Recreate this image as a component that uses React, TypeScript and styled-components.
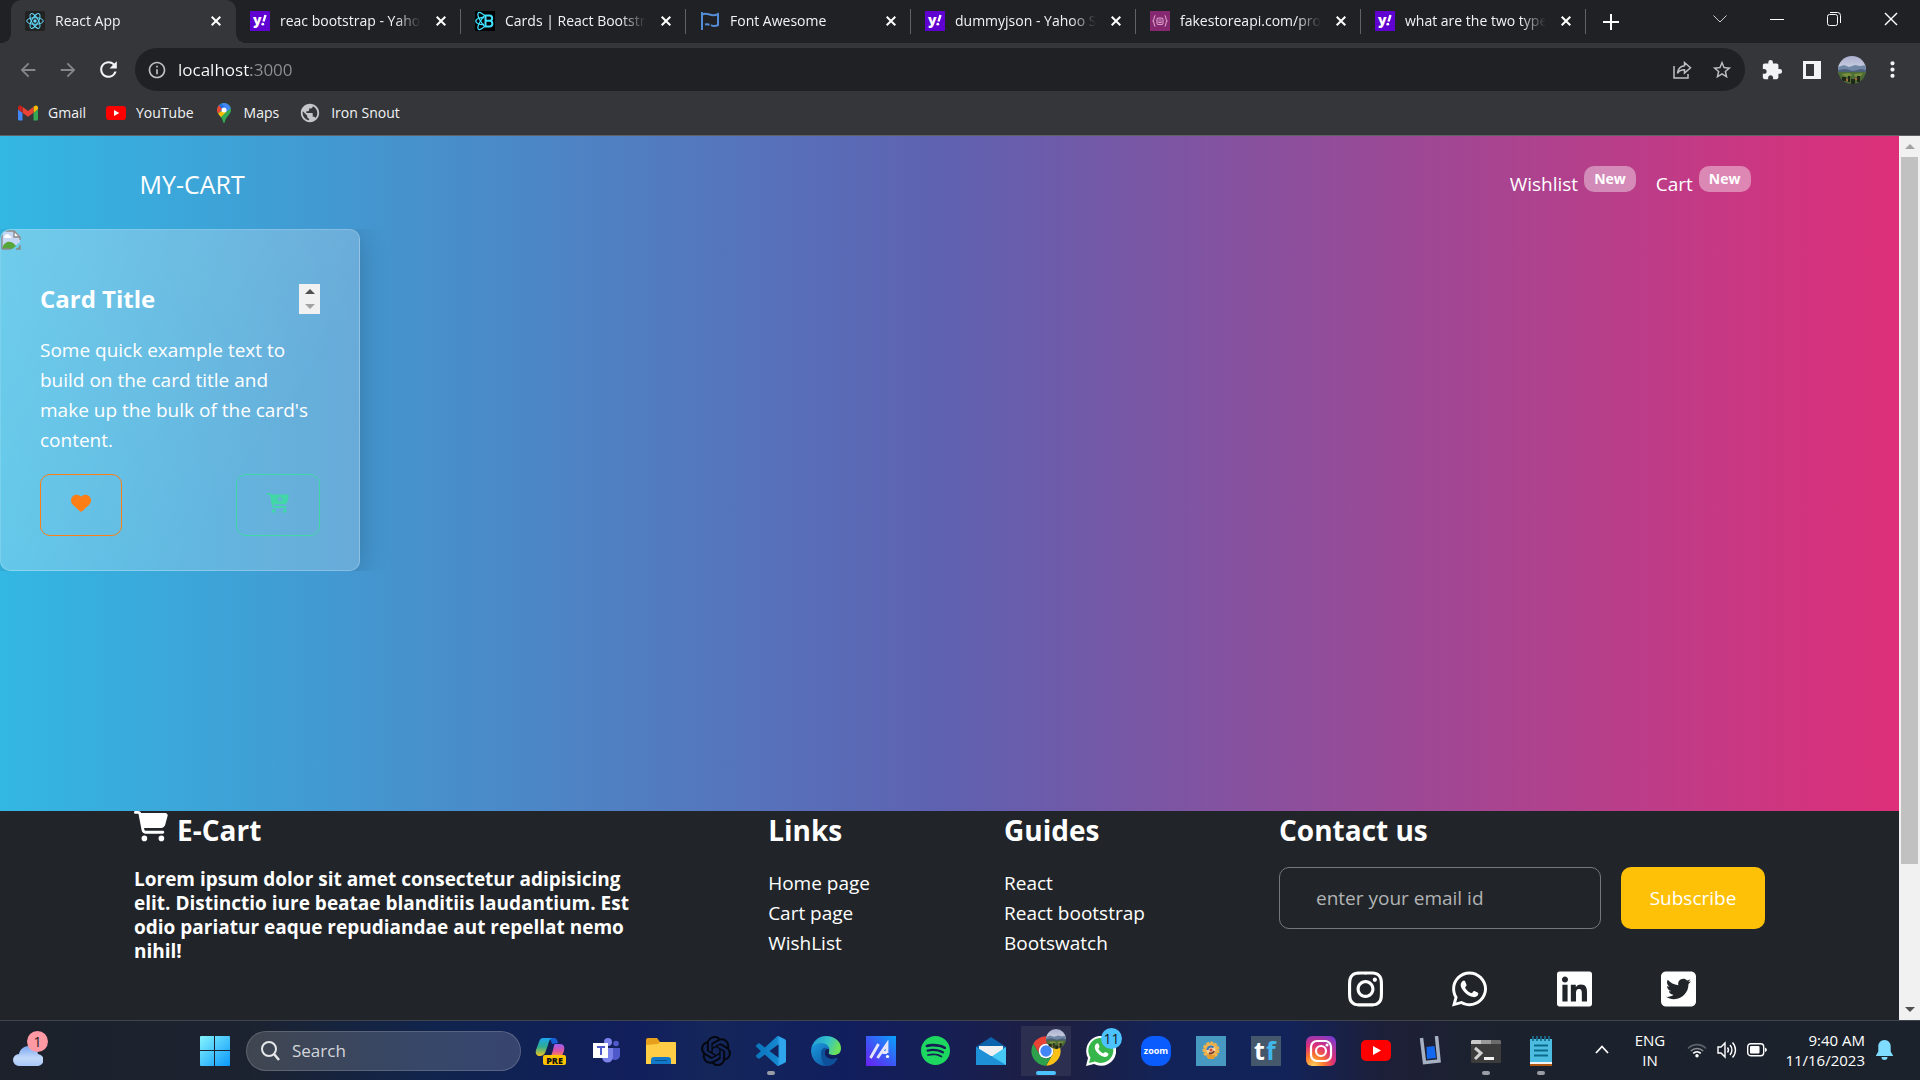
import React from "react";
import styled, { createGlobalStyle, css } from "styled-components";
import {
  FaHeart,
  FaCartPlus,
  FaCartShopping,
  FaInstagram,
  FaWhatsapp,
  FaLinkedin,
  FaSquareTwitter,
} from "react-icons/fa6";
import { SiOpenai, SiSpotify } from "react-icons/si";
import {
  MdArrowBack,
  MdArrowForward,
  MdRefresh,
  MdInfoOutline,
  MdStarBorder,
  MdExtension,
  MdMoreVert,
  MdPublic,
} from "react-icons/md";

const Global = createGlobalStyle`
  *, *::before, *::after { box-sizing: border-box; }
  body {
    margin: 0;
    font-family: "Open Sans", "Noto Sans", sans-serif;
    font-size: 19px;
    line-height: 30px;
    color: #fff;
    background: #212529;
  }
  button, input { font: inherit; color: inherit; }
  button { padding: 0; border: 0; background: none; cursor: pointer; }
  a { color: inherit; text-decoration: none; }
  h1, h2, h3, p, ul { margin: 0; padding: 0; }
  svg { display: block; flex: none; }
`;

const Screen = styled.div`
  display: flex;
  flex-direction: column;
  height: 100vh;
  overflow: hidden;
`;

/* ---------- Browser frame ---------- */

const TabStrip = styled.div`
  display: flex;
  align-items: stretch;
  height: 43px;
  padding-left: 11px;
  background: #202124;
`;

const TabList = styled.div`
  display: flex;
`;

const Tab = styled.div<{ $active?: boolean; $divided?: boolean }>`
  position: relative;
  display: flex;
  align-items: center;
  gap: 10px;
  width: 225px;
  padding: 0 10px 1px 14px;
  ${(p) =>
    p.$active &&
    css`
      background: #35363a;
      border-radius: 10px 10px 0 0;
      &::before,
      &::after {
        content: "";
        position: absolute;
        bottom: 0;
        width: 10px;
        height: 10px;
      }
      &::before {
        right: 100%;
        background: radial-gradient(circle at 0 0, transparent 10px, #35363a 10px);
      }
      &::after {
        left: 100%;
        background: radial-gradient(circle at 100% 0, transparent 10px, #35363a 10px);
      }
    `}
  ${(p) =>
    p.$divided &&
    css`
      background: linear-gradient(#5f6368, #5f6368) right center / 1px 25px no-repeat;
    `}
`;

const TabTitle = styled.button`
  flex: 1;
  min-width: 0;
  overflow: hidden;
  white-space: nowrap;
  text-align: left;
  font-size: 14px;
  line-height: 20px;
  color: #f1f3f4;
  mask-image: linear-gradient(to right, #000 82%, transparent);
`;

const SmallButton = styled.button`
  display: grid;
  place-items: center;
  width: 20px;
  height: 20px;
`;

const NewTab = styled.button`
  display: grid;
  place-items: center;
  width: 50px;
`;

const WindowControls = styled.div`
  display: flex;
  margin-left: auto;
  padding-right: 1px;
  height: 38px;
`;

const WindowButton = styled.button`
  display: grid;
  place-items: center;
  width: 57px;
`;

const Toolbar = styled.div`
  display: flex;
  align-items: center;
  height: 53px;
  padding: 0 8px;
  background: #35363a;
`;

const NavButton = styled.button<{ $dim?: boolean }>`
  display: grid;
  place-items: center;
  width: 40px;
  height: 40px;
  color: ${(p) => (p.$dim ? "#85878a" : "#f1f3f4")};
`;

const Omnibox = styled.div`
  display: flex;
  flex: 1;
  align-items: center;
  height: 43px;
  margin: 0 7px;
  padding: 0 3px 0 12px;
  border-radius: 22px;
  background: #202124;
  color: #bdc1c6;
`;

const Address = styled.input`
  flex: 1;
  min-width: 0;
  margin-left: 11px;
  padding: 0;
  border: 0;
  outline: 0;
  font-size: 17px;
  line-height: 24px;
  color: #fff;
  background: linear-gradient(to right, #fff 73px, #8d9094 73px);
  background-clip: text;
  -webkit-text-fill-color: transparent;
`;

const Bookmarks = styled.nav`
  display: flex;
  align-items: center;
  gap: 20px;
  height: 40px;
  padding: 0 18px 6px;
  background: #35363a;
  border-bottom: 1px solid #5f6063;
  font-size: 14px;
  line-height: 20px;
  color: #f1f3f4;
`;

const Bookmark = styled.a`
  display: flex;
  align-items: center;
  gap: 10px;
`;

/* ---------- Page ---------- */

const Viewport = styled.div`
  display: flex;
  flex: 1;
  min-height: 0;
`;

const Page = styled.div`
  display: flex;
  flex: 1;
  flex-direction: column;
  min-width: 0;
  overflow: hidden;
  background: linear-gradient(90deg, #33b7e3, #5f61b0 50%, #de2f79);
`;

const Scrollbar = styled.div`
  display: flex;
  flex-direction: column;
  width: 21px;
  padding: 0 2px;
  background: #f1f1f1;
`;

const ScrollTrack = styled.div`
  flex: 1;
`;

const ScrollThumb = styled.div`
  height: 84%;
  background: #c1c1c1;
`;

const ScrollArrow = styled.button`
  display: grid;
  place-items: center;
  height: 21px;
`;

const SiteNav = styled.nav`
  display: flex;
  align-items: flex-start;
  justify-content: space-between;
  width: 100%;
  max-width: 1650px;
  margin: 0 auto;
  padding: 30px 24px 27px 15px;
`;

const Brand = styled.a`
  font-size: 25px;
  line-height: 36px;
`;

const NavLinks = styled.div`
  display: flex;
  gap: 20px;
  height: 33px;
`;

const NavLink = styled.a`
  display: flex;
  align-items: flex-end;
  gap: 6px;
`;

const Badge = styled.span`
  align-self: flex-start;
  padding: 0 10px;
  border-radius: 10px;
  background: rgba(255, 255, 255, 0.4);
  font-size: 14px;
  font-weight: 700;
  line-height: 26px;
`;

const Products = styled.main`
  flex: 1;
  overflow: hidden;
`;

const CardRow = styled.div`
  display: flex;
  overflow: hidden;
`;

const Card = styled.article`
  width: 360px;
  border: 1px solid rgba(255, 255, 255, 0.2);
  border-radius: 10px;
  background: linear-gradient(125deg, rgba(255, 255, 255, 0.3), rgba(255, 255, 255, 0.2) 70%);
  box-shadow: 1px 3px 28px rgba(0, 0, 0, 0.2);
  overflow: hidden;
`;

const CardBody = styled.div`
  padding: 34px 39px;
`;

const CardHead = styled.div`
  display: flex;
  justify-content: space-between;
  height: 30px;
  margin-bottom: 21px;
`;

const CardTitle = styled.h2`
  font-size: 24px;
  line-height: 30px;
`;

const CardText = styled.p`
  margin-bottom: 19px;
`;

const Stepper = styled.div`
  display: flex;
  flex-direction: column;
  width: 21px;
  background: #f1f1f1;
`;

const StepButton = styled.button`
  display: grid;
  flex: 1;
  place-items: center;
`;

const CardActions = styled.div`
  display: flex;
  justify-content: space-between;
`;

const OutlineButton = styled.button<{ $color: string }>`
  height: 62px;
  padding: 0 30px 4px;
  border: 1px solid ${(p) => p.$color};
  border-radius: 10px;
  color: ${(p) => p.$color};
`;

const Footer = styled.footer`
  background: #212529;
`;

const FooterInner = styled.div`
  display: flex;
  justify-content: space-between;
  width: 100%;
  max-width: 1631px;
  margin: 0 auto;
  padding-bottom: 11px;
`;

const About = styled.section`
  width: 500px;
`;

const FooterTitle = styled.h2`
  display: flex;
  gap: 9px;
  margin-bottom: 20px;
  font-size: 28px;
  line-height: 38px;
  height: 36px;
`;

const AboutText = styled.p`
  font-weight: 700;
  line-height: 24px;
`;

const LinkList = styled.ul`
  padding-top: 1px;
  list-style: none;
`;

const Contact = styled.section`
  width: 486px;
`;

const Subscribe = styled.form`
  display: flex;
  gap: 20px;
  margin-bottom: 40px;
`;

const EmailInput = styled.input`
  flex: 1;
  min-width: 0;
  height: 62px;
  padding: 0 36px;
  border: 1px solid #75787b;
  border-radius: 10px;
  outline: 0;
  background: transparent;
  &::placeholder {
    color: #b1b3b5;
    opacity: 1;
  }
`;

const SubscribeButton = styled.button`
  width: 144px;
  height: 62px;
  border-radius: 10px;
  background: #ffc107;
`;

const Socials = styled.div`
  display: flex;
  justify-content: space-evenly;
  svg {
    width: 35px;
    height: 40px;
  }
`;

/* ---------- Taskbar ---------- */

const Taskbar = styled.div`
  display: flex;
  align-items: center;
  height: 60px;
  border-top: 1px solid #3f444d;
  background: linear-gradient(
    90deg,
    #1c212b 0,
    #1c2330 13%,
    #10244e 23%,
    #111e5c 33%,
    #14265a 37%,
    #111e5e 44%,
    #171f52 50%,
    #1e1f40 55%,
    #122359 61%,
    #12235a 67%,
    #1d1f38 72%,
    #1c222d 78%,
    #1c222c 100%
  );
`;

const Widgets = styled.div`
  width: 187px;
  padding-left: 13px;
`;

const AppButton = styled.button<{ $open?: boolean }>`
  position: relative;
  display: grid;
  place-items: center;
  width: 55px;
  height: 50px;
  ${(p) =>
    p.$open &&
    css`
      background: linear-gradient(#2c2f50, #2c2f50) center / 50px 50px no-repeat;
    `}
`;

const Running = styled.span<{ $active?: boolean }>`
  position: absolute;
  bottom: 1px;
  width: ${(p) => (p.$active ? 20 : 8)}px;
  height: 4px;
  border-radius: 2px;
  background: ${(p) => (p.$active ? "#4cc2ff" : "#9a9ca6")};
`;

const Count = styled.span<{ $pink?: boolean }>`
  position: absolute;
  top: ${(p) => (p.$pink ? -4 : 2)}px;
  right: ${(p) => (p.$pink ? -5 : 6)}px;
  width: 21px;
  height: 21px;
  border-radius: 50%;
  background: ${(p) => (p.$pink ? "#ff99a4" : "#4cc2ff")};
  color: #1b1b1b;
  font-size: 14px;
  line-height: 21px;
  text-align: center;
`;

const WeatherButton = styled.button`
  position: relative;
  display: block;
  width: 30px;
  height: 32px;
  padding-top: 10px;
`;

const AvatarBadge = styled.span`
  position: absolute;
  top: 3px;
  right: 7px;
`;

const SearchBox = styled.label`
  display: flex;
  align-items: center;
  gap: 12px;
  width: 275px;
  height: 40px;
  margin: 0 2px 0 4px;
  padding: 0 13px;
  border: 1px solid rgba(255, 255, 255, 0.16);
  border-radius: 20px;
  background: rgba(255, 255, 255, 0.16);
`;

const SearchInput = styled.input`
  flex: 1;
  min-width: 0;
  padding: 0;
  border: 0;
  outline: 0;
  background: transparent;
  font-size: 17px;
  line-height: 24px;
  &::placeholder {
    color: #d4d6db;
    opacity: 1;
  }
`;

const Tray = styled.div`
  display: flex;
  align-items: center;
  margin-left: auto;
  padding: 0 26px 2px 0;
  font-size: 15px;
  line-height: 20px;
`;

const TrayButton = styled.button<{ $width: number }>`
  display: grid;
  place-items: center;
  width: ${(p) => p.$width}px;
`;

const Clock = styled.div`
  width: 90px;
  margin-right: 9px;
  text-align: right;
  white-space: nowrap;
`;

/* ---------- Drawings ---------- */

const Yahoo = () => (
  <svg width="20" height="20" viewBox="0 0 20 20">
    <path fill="#5f01d1" d="M0 0h20v20H0z" />
    <text x="3" y="14" fontSize="14" fontWeight="800" fill="#fff">
      y
    </text>
    <path d="M15.500 4l-2 6.500" stroke="#fff" strokeWidth="2.400" />
    <circle cx="12.800" cy="13.200" r="1.400" fill="#fff" />
  </svg>
);

const ReactTab = () => (
  <svg width="20" height="20" viewBox="0 0 20 20">
    <rect width="20" height="20" rx="2" fill="#222" />
    <g fill="none" stroke="#61dafb" strokeWidth="1">
      <ellipse cx="10" cy="10" rx="8.300" ry="3.300" />
      <ellipse cx="10" cy="10" rx="8.300" ry="3.300" transform="rotate(60 10 10)" />
      <ellipse cx="10" cy="10" rx="8.300" ry="3.300" transform="rotate(120 10 10)" />
    </g>
    <circle cx="10" cy="10" r="1.700" fill="#61dafb" />
  </svg>
);

const ReactBootstrap = () => (
  <svg width="20" height="20" viewBox="0 0 20 20">
    <path fill="#000" d="M0 0h20v20H0z" />
    <g fill="none" stroke="#41e0fd" strokeWidth="1.300">
      <path d="M9 6.500C4 6.500 .8 8 .8 10s3.200 3.500 8.200 3.500" />
      <path d="M9 4C6 1.500 4 .8 3.200 2c-1 1.600.6 5.500 3.300 9.500 1.500 2.300 2.500 3.500 3.500 4.500" />
      <path d="M9 16c-3 2.500-5 3.200-5.800 2-1-1.600.6-5.500 3.300-9.500C8 6.200 9 5 10 4" />
    </g>
    <path
      d="M10.500 4.500h4a2.600 2.600 0 0 1 0 5.300h-4zm0 5.300h4.500a2.900 2.900 0 0 1 0 5.700h-4.500z"
      fill="none"
      stroke="#41e0fd"
      strokeWidth="2"
    />
  </svg>
);

const Flag = () => (
  <svg width="20" height="20" viewBox="0 0 20 20" fill="none" stroke="#538dd7" strokeWidth="2">
    <path d="M2 1v18" />
    <path d="M2 3.500c3-1.200 5-.9 7.500 0 3 1.100 5.500 1 8.500-.4v11c-3 1.400-5 1.200-7-.1M5 13.500c1.500-.3 3-.3 4.500.3" />
  </svg>
);

const FakeStore = () => (
  <svg width="20" height="20" viewBox="0 0 20 20">
    <path fill="#86286f" d="M0 0h20v20H0z" />
    <g fill="none" stroke="#d9a3cd" strokeWidth="1.100">
      <path d="M5.500 4.500C3.500 4.500 4.800 9 3 10c1.800 1 .5 5.500 2.500 5.500M14.500 4.500c2 0 .7 4.500 2.500 5.500-1.800 1-.5 5.500-2.500 5.500" />
      <rect x="7" y="7" width="6" height="6.500" rx="1.500" />
      <path d="M8.500 9h3M8.500 10.500c.5 1.500 2.500 1.500 3 0" />
    </g>
  </svg>
);

const Cross = ({ size = 10, width = 2 }: { size?: number; width?: number }) => (
  <svg width={size} height={size} viewBox="0 0 10 10" stroke="#fff" strokeWidth={width}>
    <path d="M.7.7l8.600 8.600M9.300.7L.7 9.300" />
  </svg>
);

const Share = () => (
  <svg width="20" height="20" viewBox="0 0 20 20" fill="none" stroke="#bdc1c6" strokeWidth="1.500">
    <path d="M2 6v12h14v-4" />
    <path d="M12.500 2.500l6 5.300-6 5.200v-3.200c-3.500 0-5.500 1-7 3.600.4-4.300 2.700-7.200 7-7.700z" />
  </svg>
);

const Avatar = ({ size }: { size: number }) => (
  <svg width={size} height={size} viewBox="0 0 28 28">
    <defs>
      <clipPath id="avatarClip">
        <circle cx="14" cy="14" r="14" />
      </clipPath>
      <linearGradient id="avatarSky" x2="0" y2="1">
        <stop offset="0" stopColor="#aab0cf" />
        <stop offset="1" stopColor="#d0d4e4" />
      </linearGradient>
    </defs>
    <g clipPath="url(#avatarClip)">
      <path fill="url(#avatarSky)" d="M0 0h28v14H0z" />
      <path fill="#7187a6" d="M0 11l6-2 5 2 6-2 5 1 6-1v8H0z" />
      <path fill="#4c6079" d="M0 14l8-1 7 2 8-2 5 1v4H0z" />
      <path fill="#4f6b35" d="M0 16h28v12H0z" />
      <path fill="#76903f" d="M3 18l8-1 4 2-7 2zM16 18l9-1-2 3-6 1z" />
      <path fill="#1f2818" d="M4 21h4v4H4zM10 20h2v6h-2zM13 23h4v5h-4zM19 20h3v6h-3z" />
      <path fill="#a9683f" d="M8 23h2v2H8zM17 22h2v2h-2z" />
    </g>
  </svg>
);

const Gmail = () => (
  <svg width="20" height="20" viewBox="0 0 24 24">
    <path fill="#4285f4" d="M1.600 21h3.800v-9.300L0 7.600v11.800C0 20.300.7 21 1.600 21z" />
    <path fill="#34a853" d="M18.600 21h3.800c.9 0 1.600-.7 1.600-1.600V7.600l-5.400 4.100z" />
    <path fill="#fbbc04" d="M18.600 4.600v7.100L24 7.600V5.500c0-2-2.300-3.200-3.900-2z" />
    <path fill="#ea4335" d="M5.400 11.700V4.600l6.600 5 6.600-5v7.100l-6.600 4.900z" />
    <path fill="#c5221f" d="M0 5.500v2.100l5.400 4.100V4.600L3.900 3.500C2.300 2.300 0 3.500 0 5.500z" />
  </svg>
);

const YouTube = ({ width = 20 }: { width?: number }) => (
  <svg width={width} height={(width * 7) / 10} viewBox="0 0 30 21">
    <rect width="30" height="21" rx="5" fill="#f00" />
    <path fill="#fff" d="M12 6l8 4.500-8 4.500z" />
  </svg>
);

const Maps = () => (
  <svg width="20" height="20" viewBox="0 0 20 20">
    <defs>
      <clipPath id="pinClip">
        <path d="M10 0a7 7 0 0 0-7 7c0 4.500 5 6 6.200 12.200.2 1 1.400 1 1.600 0C12 13 17 11.500 17 7a7 7 0 0 0-7-7z" />
      </clipPath>
    </defs>
    <g clipPath="url(#pinClip)">
      <path fill="#34a853" d="M0 0h20v20H0z" />
      <path fill="#fbbc04" d="M3 12L14 1v6l-8 8z" />
      <path fill="#4285f4" d="M8 0h12v3l-8 6-4-3z" />
      <path fill="#1a73e8" d="M3 2l3-2 5 4-4 5z" />
      <path fill="#ea4335" d="M0 4l5-2 3 4-5 6z" />
    </g>
    <circle cx="10" cy="7" r="2.500" fill="#fff" />
  </svg>
);

const BrokenImage = () => (
  <svg width="20" height="20" viewBox="0 0 20 20" role="img" aria-label="Product">
    <path fill="#c6d6f5" d="M1 1h12l6 5v6l-9 7H1z" />
    <path fill="#fff" d="M13 1v5h6zM3 7c0-3 5-4 6-1 2 0 2 2 1 2H4c-1 0-1-1-1-1z" />
    <path fill="#57a63a" d="M1 19c2-9 10-9 14-3l-4 3zM16 19l3-3v3z" />
    <path d="M1 19V1h12l6 6v3M1 19h9M15 19h4v-4M13 1v6h6" fill="none" stroke="#8b8b8b" strokeWidth="1.400" />
  </svg>
);

const Triangle = ({ down, color }: { down?: boolean; color: string }) => (
  <svg width="10" height="5" viewBox="0 0 10 5">
    <path fill={color} d={down ? "M0 0h10L5 5z" : "M0 5h10L5 0z"} />
  </svg>
);

const Cloud = () => (
  <svg width="30" height="20" viewBox="0 0 30 20">
    <defs>
      <linearGradient id="cloud" x2="0" y2="1">
        <stop offset="0" stopColor="#7ba6ee" />
        <stop offset=".6" stopColor="#c3d9fb" />
        <stop offset="1" stopColor="#a7c7f7" />
      </linearGradient>
    </defs>
    <path fill="url(#cloud)" d="M6 20a6 6 0 0 1 0-12C7 3 11 0 16 0c5 0 8 3 9 8a6 6 0 0 1-1 12z" />
  </svg>
);

const WindowsLogo = () => (
  <svg width="30" height="30" viewBox="0 0 30 30">
    <defs>
      <linearGradient id="win" x2="1" y2="1">
        <stop offset="0" stopColor="#85f4fd" />
        <stop offset="1" stopColor="#0a98fb" />
      </linearGradient>
    </defs>
    <path fill="url(#win)" d="M0 1a1 1 0 0 1 1-1h13v14H0zM15 0h14a1 1 0 0 1 1 1v13H15zM0 15h14v15H1a1 1 0 0 1-1-1zM15 15h15v14a1 1 0 0 1-1 1H15z" />
  </svg>
);

const Copilot = () => (
  <svg width="32" height="30" viewBox="0 0 32 30">
    <defs>
      <linearGradient id="copA" x2="0" y2="1">
        <stop offset="0" stopColor="#1ba5f0" />
        <stop offset=".5" stopColor="#2fae8f" />
        <stop offset="1" stopColor="#f2c51d" />
      </linearGradient>
      <linearGradient id="copB" x2="0" y2="1">
        <stop offset="0" stopColor="#9a5cf0" />
        <stop offset=".6" stopColor="#e0549e" />
        <stop offset="1" stopColor="#fb8a4c" />
      </linearGradient>
    </defs>
    <path fill="#1560d8" d="M15 2h4c2 0 3 1 4 5l-6 1z" />
    <path fill="url(#copA)" d="M8 2h10c-3 0-4 3-5 7l-3 8c-1 2-3 3-5 3-3 0-5-2-4-6l3-8c1-3 2-4 4-4z" />
    <path fill="url(#copB)" d="M20 8h5c4 0 5 3 4 7l-2 5H14c3 0 3-3 4-6 1-4 1-6 2-6z" />
    <rect x="8" y="19" width="23" height="10" rx="2" fill="#ffc400" />
    <text x="19.500" y="27.500" fontSize="9" fontWeight="800" textAnchor="middle" fill="#111">
      PRE
    </text>
  </svg>
);

const Teams = () => (
  <svg width="30" height="30" viewBox="0 0 30 30">
    <circle cx="17" cy="6" r="4" fill="#7b83eb" />
    <circle cx="25" cy="7.500" r="2.800" fill="#5059c9" />
    <path fill="#5059c9" d="M19 12h10v7a5 5 0 0 1-9 3z" />
    <path fill="#7b83eb" d="M11 12h11v9a5.500 5.500 0 0 1-11 0z" />
    <path fill="#fff" d="M2 7h15v15H2z" />
    <path fill="#5059c9" d="M6 10h8v2h-3v7H9v-7H6z" />
  </svg>
);

const Folder = () => (
  <svg width="30" height="30" viewBox="0 0 30 30">
    <path fill="#e8a01c" d="M0 4a2 2 0 0 1 2-2h9l3 4h14a2 2 0 0 1 2 2v6H0z" />
    <path fill="#ffcd46" d="M0 9l12-1 2-2h15a1 1 0 0 1 1 1v21H0z" />
    <path fill="#1278c8" d="M5 28v-4a3 3 0 0 1 3-3h14a3 3 0 0 1 3 3v4z" />
    <path fill="#0a4f8f" d="M9 24h12v1H9z" />
  </svg>
);

const VsCode = () => (
  <svg width="30" height="30" viewBox="0 0 24 24">
    <defs>
      <linearGradient id="vsc">
        <stop offset="0" stopColor="#0a74ba" />
        <stop offset=".7" stopColor="#1487d0" />
        <stop offset=".8" stopColor="#2fa5ee" />
      </linearGradient>
    </defs>
    <path
      fill="url(#vsc)"
      d="M23.150 2.587L18.210.21a1.494 1.494 0 0 0-1.705.29l-9.460 8.630-4.120-3.128a.999.999 0 0 0-1.276.057L.327 7.261A1 1 0 0 0 .326 8.740L3.899 12 .326 15.260a1 1 0 0 0 .001 1.479L1.650 17.940a.999.999 0 0 0 1.276.057l4.120-3.128 9.460 8.630a1.492 1.492 0 0 0 1.704.29l4.942-2.377A1.500 1.500 0 0 0 24 20.060V3.939a1.500 1.500 0 0 0-.850-1.352zm-5.146 14.861L10.826 12l7.178-5.448v10.896z"
    />
  </svg>
);

const Edge = () => (
  <svg width="30" height="30" viewBox="0 0 30 30">
    <defs>
      <linearGradient id="edgeA" x2="1" y2=".3">
        <stop offset="0" stopColor="#1d93d8" />
        <stop offset=".6" stopColor="#35c3c9" />
        <stop offset="1" stopColor="#6be05a" />
      </linearGradient>
      <linearGradient id="edgeB" x2="1" y2="1">
        <stop offset="0" stopColor="#1c9be0" />
        <stop offset="1" stopColor="#0c4a96" />
      </linearGradient>
    </defs>
    <path fill="url(#edgeA)" d="M0 14C1 6 7 0 15 0c9 0 15 6 15 12 0 5-3 7-7 7-4 0-6-1-5-3 1-3-1-8-8-8-5 0-9 3-10 6z" />
    <path fill="url(#edgeB)" d="M0 14C2 9 6 7 10 7c5 0 8 3 8.500 6-3-1-5 1-5 4 0 4 5 8 13 5-2 5-6 8-11.500 8C6 30 0 23 0 14z" />
    <path fill="#0e4f9a" d="M10 17c0-4 3-6 6-5-2 1-2.500 3-2.500 5 0 4 5 8 13 5-2 5-6 8-11.500 8-3-2-5-7-5-13z" />
  </svg>
);

const MyAsus = () => (
  <svg width="30" height="30" viewBox="0 0 30 30">
    <defs>
      <linearGradient id="asus" x1="0" y1="1" x2="1" y2="0">
        <stop offset="0" stopColor="#6a1ff0" />
        <stop offset=".5" stopColor="#3a5bf8" />
        <stop offset="1" stopColor="#08a2fb" />
      </linearGradient>
    </defs>
    <path fill="url(#asus)" d="M0 0h30v30H0z" />
    <path d="M4.500 22l8-14M11.500 22l9.500-14v9M16.500 16.500H21" stroke="#e4e6fb" strokeWidth="2.800" fill="none" />
    <circle cx="21.500" cy="20.500" r="1.600" fill="#fff" />
  </svg>
);

const Mail = () => (
  <svg width="30" height="30" viewBox="0 0 30 30">
    <path fill="#0c63ad" d="M0 11L15 1l15 10v5H0z" />
    <path fill="#eef0f2" d="M3 10h24v10H3z" />
    <path fill="#2b9fe0" d="M0 11l15 10L0 29z" />
    <path fill="#46c8f5" d="M30 11v18H0l15-8z" />
    <path fill="#1d90d8" d="M0 11l30 18H0z" />
    <path fill="#eef0f2" d="M3 10h24L15 20z" />
  </svg>
);

const Chrome = () => (
  <svg width="32" height="32" viewBox="0 0 48 48">
    <path fill="#e94335" d="M4.950 13A22 22 0 0 1 43.050 13H24a11 11 0 0 0-9.530 16.500z" />
    <path fill="#fbc116" d="M43.050 13A22 22 0 0 1 24 46l9.530-16.500A11 11 0 0 0 24 13z" />
    <path fill="#2da14c" d="M24 46A22 22 0 0 1 4.950 13l9.520 16.500a11 11 0 0 0 19.060 0z" />
    <circle cx="24" cy="24" r="11" fill="#fff" />
    <circle cx="24" cy="24" r="8.500" fill="#4285f4" />
  </svg>
);

const WhatsAppLogo = () => (
  <svg width="30" height="30" viewBox="0 0 30 30">
    <path fill="#fff" d="M0 30l2-8A15 15 0 1 1 8 28z" />
    <path fill="#35b54a" d="M3 27l1.500-5.500A12.500 12.500 0 1 1 9 25.500z" />
    <path fill="#fff" d="M10 8c1-1 2-1 2.500 0l1 2.500c.3.800-1.300 1.800-1 2.500 1 2 2.500 3.500 4.500 4.300.8.3 1.700-1.700 2.500-1.300l2.500 1.200c.8.500.3 2.300-.7 3-1.300 1-3.300.9-5 .1-3.500-1.500-6-4-7.300-7.300C8.500 11 9 9 10 8z" />
  </svg>
);

const Zoom = () => (
  <svg width="30" height="30" viewBox="0 0 30 30">
    <rect width="30" height="30" rx="12" fill="#0b5cff" />
    <text x="15" y="17.500" fontSize="9" fontWeight="700" textAnchor="middle" fill="#fff">
      zoom
    </text>
  </svg>
);

const Gear = () => (
  <svg width="30" height="30" viewBox="0 0 30 30">
    <path fill="#4799c2" d="M0 0h30v30H0z" />
    <circle cx="15" cy="14" r="7" fill="#f0b24a" stroke="#f0b24a" strokeWidth="3" strokeDasharray="3 1" />
    <path fill="#e89b2d" d="M11 19h8l-1 4h-6z" />
    <circle cx="15" cy="14" r="4.500" fill="#f0d3a0" />
    <path d="M11.500 14a3.500 3.500 0 0 1 6-2.500" stroke="#3a77b8" strokeWidth="2" fill="none" />
    <path d="M18 15a3.500 3.500 0 0 1-5 2" stroke="#7a3b2a" strokeWidth="2" fill="none" />
    <circle cx="15" cy="14" r="1.500" fill="#d6453b" />
  </svg>
);

const Testbook = () => (
  <svg width="30" height="30" viewBox="0 0 30 30">
    <path fill="#45576a" d="M0 0h30v30H0z" />
    <text x="3" y="24" fontSize="25" fontWeight="700" fill="#fff">
      t
    </text>
    <text x="15" y="24" fontSize="25" fontWeight="700" fill="#41b6ea">
      f
    </text>
  </svg>
);

const InstagramLogo = () => (
  <svg width="30" height="30" viewBox="0 0 30 30">
    <defs>
      <radialGradient id="insta" cx=".25" cy="1" r="1.150">
        <stop offset="0" stopColor="#ffd35c" />
        <stop offset=".3" stopColor="#fb7a2c" />
        <stop offset=".6" stopColor="#dc2f78" />
        <stop offset="1" stopColor="#7a3bd0" />
      </radialGradient>
    </defs>
    <rect width="30" height="30" rx="6" fill="url(#insta)" />
    <g fill="none" stroke="#fff" strokeWidth="2.200">
      <rect x="5" y="5" width="20" height="20" rx="6" />
      <circle cx="15" cy="15" r="5" />
    </g>
    <circle cx="21" cy="9" r="1.500" fill="#fff" />
  </svg>
);

const Bracket = () => (
  <svg width="30" height="30" viewBox="0 0 30 30">
    <path d="M5.500 2l3 24.500 14.500-1.500-2.500-25" fill="none" stroke="#a5b0c2" strokeWidth="3.500" />
    <path fill="#1468f0" d="M10.500 11l8-1 1.500 12-9 1z" />
  </svg>
);

const Terminal = () => (
  <svg width="30" height="30" viewBox="0 0 30 30">
    <path fill="#3c3c3c" d="M0 5h30v21a1 1 0 0 1-1 1H1a1 1 0 0 1-1-1z" />
    <path fill="#c8c8c8" d="M1 4h9v4H0V5z" />
    <path fill="#9a9a9a" d="M10 4h10v4H10z" />
    <path fill="#6b6b6b" d="M20 4h9l1 1v3H20z" />
    <path d="M4 12l6 5-6 6" fill="none" stroke="#d0d0d0" strokeWidth="3" />
    <path fill="#f2f2f2" d="M13 21h10v3H13z" />
  </svg>
);

const Notepad = () => (
  <svg width="24" height="30" viewBox="0 0 24 30">
    <path fill="#b35a12" d="M1 26h22v4H1z" />
    <path fill="#f3f3f3" d="M1 24h22v4H1z" />
    <path fill="#4cbde0" d="M1 3h22v23H1z" />
    <path d="M4 0v5M8 0v5M12 0v5M16 0v5M20 0v5" stroke="#1a6c8c" strokeWidth="1.800" />
    <path d="M5 9.500h14M5 14.500h14M5 19.500h14" stroke="#0b6a8a" strokeWidth="2" />
  </svg>
);

const Wifi = () => (
  <svg width="20" height="16" viewBox="0 0 20 16" fill="none" strokeWidth="1.600">
    <path d="M1 6.500a12.500 12.500 0 0 1 18 0" stroke="#5b6069" />
    <path d="M3.800 9a9 9 0 0 1 12.400 0" stroke="#8b8f96" />
    <path d="M6.200 11.300a5.600 5.600 0 0 1 7.600 0" stroke="#fff" />
    <circle cx="10" cy="13.700" r="1.700" fill="#fff" />
  </svg>
);

const Speaker = () => (
  <svg width="20" height="18" viewBox="0 0 20 18" fill="none" stroke="#fff" strokeWidth="1.400">
    <path d="M1 6h3l4-4v14l-4-4H1z" />
    <path d="M10.500 6.500a4 4 0 0 1 0 5M13 4a7.500 7.500 0 0 1 0 10M15.500 1.500a11 11 0 0 1 0 15" />
  </svg>
);

const Battery = () => (
  <svg width="20" height="14" viewBox="0 0 20 14">
    <rect x=".7" y=".7" width="16" height="12" rx="3" fill="none" stroke="#fff" strokeWidth="1.400" />
    <rect x="3" y="3" width="9.500" height="7.500" rx="1" fill="#fff" />
    <path fill="#fff" d="M18 4.500a3 3 0 0 1 2 2.500 3 3 0 0 1-2 2z" />
  </svg>
);

const Bell = () => (
  <svg width="17" height="20" viewBox="0 0 17 20" fill="#7fdcff">
    <path d="M8.500 0C4.500 0 2.300 3 2.300 6.500v5L0 15.500V16h17v-.5l-2.300-4v-5C14.700 3 12.500 0 8.500 0z" />
    <path d="M5.500 17h6a3 3 0 0 1-6 0z" />
  </svg>
);

/* ---------- Data ---------- */

const tabs = [
  { title: "React App", icon: <ReactTab /> },
  { title: "reac bootstrap - Yahoo Search", icon: <Yahoo /> },
  { title: "Cards | React Bootstrap", icon: <ReactBootstrap /> },
  { title: "Font Awesome", icon: <Flag /> },
  { title: "dummyjson - Yahoo Search", icon: <Yahoo /> },
  { title: "fakestoreapi.com/products", icon: <FakeStore /> },
  { title: "what are the two types of", icon: <Yahoo /> },
];

const bookmarks = [
  { label: "Gmail", icon: <Gmail /> },
  { label: "YouTube", icon: <YouTube /> },
  { label: "Maps", icon: <Maps /> },
  { label: "Iron Snout", icon: <MdPublic size={22} color="#c4c7ca" /> },
];

type App = { name: string; icon: React.ReactNode; running?: boolean; current?: boolean; count?: number };

const apps: App[] = [
  { name: "Copilot", icon: <Copilot /> },
  { name: "Teams", icon: <Teams /> },
  { name: "File Explorer", icon: <Folder /> },
  { name: "ChatGPT", icon: <SiOpenai size={30} color="#05070f" /> },
  { name: "Visual Studio Code", icon: <VsCode />, running: true },
  { name: "Edge", icon: <Edge /> },
  { name: "MyASUS", icon: <MyAsus /> },
  { name: "Spotify", icon: <SiSpotify size={29} color="#1ed760" /> },
  { name: "Mail", icon: <Mail /> },
  { name: "Chrome", icon: <Chrome />, current: true },
  { name: "WhatsApp", icon: <WhatsAppLogo />, count: 11 },
  { name: "Zoom", icon: <Zoom /> },
  { name: "Settings tool", icon: <Gear /> },
  { name: "Typing", icon: <Testbook /> },
  { name: "Instagram", icon: <InstagramLogo /> },
  { name: "YouTube", icon: <YouTube width={30} /> },
  { name: "Unstop", icon: <Bracket /> },
  { name: "Terminal", icon: <Terminal />, running: true },
  { name: "Notepad", icon: <Notepad />, running: true },
];

const columns = [
  { title: "Links", items: ["Home page", "Cart page", "WishList"] },
  { title: "Guides", items: ["React", "React bootstrap", "Bootswatch"] },
];

/* ---------- Sections ---------- */

function Browser() {
  return (
    <header>
      <TabStrip>
        <TabList>
          {tabs.map((tab, i) => (
            <Tab key={i} $active={i === 0} $divided={i > 0}>
              {tab.icon}
              <TabTitle>{tab.title}</TabTitle>
              <SmallButton aria-label="Close tab">
                <Cross />
              </SmallButton>
            </Tab>
          ))}
        </TabList>
        <NewTab aria-label="New tab">
          <svg width="16" height="16" viewBox="0 0 16 16" stroke="#fff" strokeWidth="2">
            <path d="M8 0v16M0 8h16" />
          </svg>
        </NewTab>
        <WindowControls>
          <WindowButton aria-label="Search tabs">
            <svg width="14" height="8" viewBox="0 0 14 8" fill="none" stroke="#ccc">
              <path d="M.5.5L7 7 13.500.5" />
            </svg>
          </WindowButton>
          <WindowButton aria-label="Minimize">
            <svg width="14" height="1" viewBox="0 0 14 1">
              <path fill="#fff" d="M0 0h14v1H0z" />
            </svg>
          </WindowButton>
          <WindowButton aria-label="Restore">
            <svg width="14" height="14" viewBox="0 0 14 14" fill="none" stroke="#fff">
              <rect x=".5" y="2.500" width="10" height="11" rx="2" />
              <path d="M3 .5h7.500a3 3 0 0 1 3 3V11" />
            </svg>
          </WindowButton>
          <WindowButton aria-label="Close">
            <Cross size={14} width={1} />
          </WindowButton>
        </WindowControls>
      </TabStrip>
      <Toolbar>
        <NavButton $dim aria-label="Back">
          <MdArrowBack size={22} />
        </NavButton>
        <NavButton $dim aria-label="Forward">
          <MdArrowForward size={22} />
        </NavButton>
        <NavButton aria-label="Reload">
          <MdRefresh size={25} />
        </NavButton>
        <Omnibox>
          <MdInfoOutline size={20} />
          <Address aria-label="Address" defaultValue="localhost:3000" />
          <NavButton aria-label="Share">
            <Share />
          </NavButton>
          <NavButton aria-label="Bookmark this tab">
            <MdStarBorder size={22} color="#bdc1c6" />
          </NavButton>
        </Omnibox>
        <NavButton aria-label="Extensions">
          <MdExtension size={22} />
        </NavButton>
        <NavButton aria-label="Side panel">
          <svg width="18" height="18" viewBox="0 0 18 18">
            <path fill="#f1f3f4" fillRule="evenodd" d="M0 0h18v18H0zM3 3v12h8V3z" />
          </svg>
        </NavButton>
        <NavButton aria-label="Profile">
          <Avatar size={28} />
        </NavButton>
        <NavButton aria-label="Menu">
          <MdMoreVert size={25} />
        </NavButton>
      </Toolbar>
      <Bookmarks>
        {bookmarks.map((b) => (
          <Bookmark key={b.label} href="#">
            {b.icon}
            {b.label}
          </Bookmark>
        ))}
      </Bookmarks>
    </header>
  );
}

function ProductCard() {
  return (
    <Card>
      <BrokenImage />
      <CardBody>
        <CardHead>
          <CardTitle>Card Title</CardTitle>
          <Stepper>
            <StepButton aria-label="Scroll up">
              <Triangle color="#505050" />
            </StepButton>
            <StepButton aria-label="Scroll down">
              <Triangle down color="#a3a3a3" />
            </StepButton>
          </Stepper>
        </CardHead>
        <CardText>
          Some quick example text to build on the card title and make up the bulk of the card's content.
        </CardText>
        <CardActions>
          <OutlineButton $color="#fd7e14" aria-label="Add to wishlist">
            <FaHeart size={20} />
          </OutlineButton>
          <OutlineButton $color="#41d7a7" aria-label="Add to cart">
            <FaCartPlus size={22} />
          </OutlineButton>
        </CardActions>
      </CardBody>
    </Card>
  );
}

function SiteFooter() {
  return (
    <Footer>
      <FooterInner>
        <About>
          <FooterTitle>
            <FaCartShopping size={34} viewBox="0 0 576 576" />
            E-Cart
          </FooterTitle>
          <AboutText>
            Lorem ipsum dolor sit amet consectetur adipisicing elit. Distinctio iure beatae blanditiis
            laudantium. Est odio pariatur eaque repudiandae aut repellat nemo nihil!
          </AboutText>
        </About>
        {columns.map((c) => (
          <section key={c.title}>
            <FooterTitle>{c.title}</FooterTitle>
            <LinkList>
              {c.items.map((item) => (
                <li key={item}>
                  <a href="#">{item}</a>
                </li>
              ))}
            </LinkList>
          </section>
        ))}
        <Contact>
          <FooterTitle>Contact us</FooterTitle>
          <Subscribe onSubmit={(e) => e.preventDefault()}>
            <EmailInput type="email" aria-label="Email" placeholder="enter your email id" />
            <SubscribeButton>Subscribe</SubscribeButton>
          </Subscribe>
          <Socials>
            <a href="#" aria-label="Instagram">
              <FaInstagram />
            </a>
            <a href="#" aria-label="WhatsApp">
              <FaWhatsapp />
            </a>
            <a href="#" aria-label="LinkedIn">
              <FaLinkedin />
            </a>
            <a href="#" aria-label="Twitter">
              <FaSquareTwitter />
            </a>
          </Socials>
        </Contact>
      </FooterInner>
    </Footer>
  );
}

function WindowsTaskbar() {
  return (
    <Taskbar>
      <Widgets>
        <WeatherButton aria-label="Weather">
          <Cloud />
          <Count $pink>1</Count>
        </WeatherButton>
      </Widgets>
      <AppButton aria-label="Start">
        <WindowsLogo />
      </AppButton>
      <SearchBox>
        <svg width="20" height="20" viewBox="0 0 20 20" fill="none" stroke="#e6e7ea" strokeWidth="2">
          <circle cx="9" cy="8" r="7" />
          <path d="M14 13l5 6" strokeWidth="2.500" />
        </svg>
        <SearchInput type="search" placeholder="Search" aria-label="Search" />
      </SearchBox>
      {apps.map((app, i) => (
        <AppButton key={i} $open={app.current} aria-label={app.name}>
          {app.icon}
          {app.current && (
            <AvatarBadge>
              <Avatar size={20} />
            </AvatarBadge>
          )}
          {app.count && <Count>{app.count}</Count>}
          {(app.running || app.current) && <Running $active={app.current} />}
        </AppButton>
      ))}
      <Tray>
        <TrayButton $width={38} aria-label="Hidden icons">
          <svg width="14" height="9" viewBox="0 0 14 9" fill="none" stroke="#fff" strokeWidth="1.800">
            <path d="M1 8l6-6.500L13 8" />
          </svg>
        </TrayButton>
        <TrayButton $width={58}>
          ENG
          <br />
          IN
        </TrayButton>
        <TrayButton $width={36} aria-label="Network">
          <Wifi />
        </TrayButton>
        <TrayButton $width={24} aria-label="Volume">
          <Speaker />
        </TrayButton>
        <TrayButton $width={36} aria-label="Battery">
          <Battery />
        </TrayButton>
        <Clock>
          9:40 AM
          <br />
          11/16/2023
        </Clock>
        <TrayButton $width={20} aria-label="Notifications">
          <Bell />
        </TrayButton>
      </Tray>
    </Taskbar>
  );
}

export default function App() {
  return (
    <Screen>
      <Global />
      <Browser />
      <Viewport>
        <Page>
          <SiteNav>
            <Brand href="#">MY-CART</Brand>
            <NavLinks>
              <NavLink href="#">
                Wishlist <Badge>New</Badge>
              </NavLink>
              <NavLink href="#">
                Cart <Badge>New</Badge>
              </NavLink>
            </NavLinks>
          </SiteNav>
          <Products>
            <CardRow>
              <ProductCard />
            </CardRow>
          </Products>
          <SiteFooter />
        </Page>
        <Scrollbar>
          <ScrollArrow aria-label="Scroll page up">
            <Triangle color="#a3a3a3" />
          </ScrollArrow>
          <ScrollTrack>
            <ScrollThumb />
          </ScrollTrack>
          <ScrollArrow aria-label="Scroll page down">
            <Triangle down color="#505050" />
          </ScrollArrow>
        </Scrollbar>
      </Viewport>
      <WindowsTaskbar />
    </Screen>
  );
}
